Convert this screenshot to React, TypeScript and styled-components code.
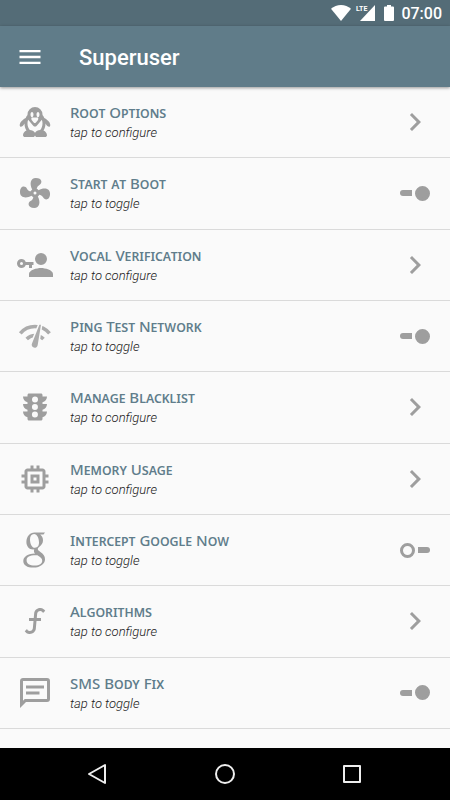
import React, { useState } from "react";
import styled, { createGlobalStyle } from "styled-components";
import { MdChevronRight, MdMemory, MdMenu, MdTraffic } from "react-icons/md";

const GlobalStyle = createGlobalStyle`
  *, *::before, *::after { box-sizing: border-box; }
  body {
    margin: 0;
    background: #fafafa;
    font-family: Roboto, "Noto Sans", sans-serif;
  }
`;

const Screen = styled.div`
  display: flex;
  flex-direction: column;
  min-height: 100vh;
`;

const StatusBar = styled.div`
  display: flex;
  align-items: center;
  justify-content: flex-end;
  height: 26px;
  padding-right: 8px;
  background: #546c77;
  color: #fff;
`;

const StatusIcon = styled.svg<{ $gap: number }>`
  display: block;
  height: 16px;
  margin-right: ${(p) => p.$gap}px;
  fill: #fff;
`;

const NetworkType = styled.span`
  align-self: flex-start;
  margin: 5px -7px 0 0;
  font: 700 7px/8px Roboto, sans-serif;
`;

const Clock = styled.time`
  font-size: 16px;
  font-weight: 500;
  line-height: 24px;
  padding-top: 2px;
`;

const AppBar = styled.header`
  display: flex;
  align-items: center;
  height: 61px;
  padding: 0 16px;
  gap: 35px;
  background: #607c89;
  color: #fff;
  box-shadow: 0 1px 3px rgba(0, 0, 0, 0.4);
`;

const IconButton = styled.button`
  display: flex;
  padding: 0;
  border: 0;
  background: none;
  color: inherit;
  cursor: pointer;
`;

const AppTitle = styled.h1`
  margin: 0;
  padding-top: 2px;
  font-size: 22px;
  font-weight: 500;
  line-height: 28px;
`;

const Options = styled.ul`
  flex: 1;
  display: grid;
  grid-auto-rows: 1fr;
  margin: 0;
  padding: 0 0 19px;
  list-style: none;
`;

const Option = styled.li`
  display: flex;
  border-bottom: 1px solid #dadada;
`;

const OptionBody = styled.label`
  flex: 1;
  display: flex;
  align-items: center;
  min-height: 70px;
  padding: 0 17px;
  border: 0;
  background: none;
  font-family: inherit;
  text-align: left;
  cursor: pointer;
`;

const Leading = styled.span`
  display: flex;
  margin-right: 17px;
  color: #9e9e9e;
`;

const Texts = styled.span`
  flex: 1;
  display: flex;
  flex-direction: column;
  gap: 2px;
`;

const Name = styled.span`
  font-family: "Noto Sans", sans-serif;
  font-size: 15px;
  font-weight: 500;
  font-variant-caps: small-caps;
  line-height: 20px;
  color: #607d8b;
`;

const Hint = styled.span`
  font-size: 13px;
  font-style: italic;
  font-weight: 300;
  line-height: 18px;
  color: #212121;
`;

const Trailing = styled.span`
  display: flex;
  justify-content: center;
  width: 36px;
  color: #9e9e9e;
`;

const Switch = styled.input`
  appearance: none;
  display: flex;
  flex-direction: row-reverse;
  align-items: center;
  justify-content: space-between;
  width: 30px;
  height: 15px;
  margin: 0;
  cursor: pointer;

  &::before {
    content: "";
    width: 12px;
    height: 6px;
    border-radius: 0 3px 3px 0;
    background: #9e9e9e;
  }
  &::after {
    content: "";
    width: 15px;
    height: 15px;
    border: 3px solid #9e9e9e;
    border-radius: 50%;
  }
  &:checked {
    flex-direction: row;
  }
  &:checked::before {
    border-radius: 3px 0 0 3px;
  }
  &:checked::after {
    background: #9e9e9e;
  }
`;

const NavBar = styled.nav`
  display: flex;
  align-items: center;
  justify-content: center;
  gap: 99px;
  height: 52px;
  background: #000;
`;

const NavIcon = styled.svg`
  display: block;
  width: 28px;
  height: 28px;
  fill: none;
  stroke: #eee;
  stroke-width: 2;
  stroke-linejoin: round;
`;

const Glyph = ({ d }: { d: string }) => (
  <svg width="36" height="36" viewBox="0 0 24 24" fill="currentColor" aria-hidden="true">
    <path d={d} />
  </svg>
);

const PENGUIN =
  "M13.18,14.5C12.53,15.26 11.47,15.26 10.82,14.5L7.44,10.5C7.16,11.28 7,12.12 7,13C7,14.67 7.57,16.18 8.5,17.27C10,17.37 11.29,17.96 11.78,19C11.85,19 11.93,19 12.22,19C12.71,18 13.95,17.44 15.46,17.33C16.41,16.24 17,14.7 17,13C17,12.12 16.84,11.28 16.56,10.5L13.18,14.5M20,20.75C20,21.3 19.3,22 18.75,22H13.25C12.7,22 12,21.3 12,20.75C12,21.3 11.3,22 10.75,22H5.25C4.7,22 4,21.3 4,20.75C4,19.45 4.94,18.31 6.3,17.65C5.5,16.34 5,14.73 5,13C4,15 2.7,15.56 2.09,15C1.5,14.44 1.79,12.83 3.1,11.41C3.84,10.6 5,9.62 5.81,9.25C6.13,8.56 6.54,7.93 7,7.38V7A5,5 0 0,1 12,2A5,5 0 0,1 17,7V7.38C17.46,7.93 17.87,8.56 18.19,9.25C19,9.62 20.16,10.6 20.9,11.41C22.21,12.83 22.5,14.44 21.91,15C21.3,15.56 20,15 19,13C19,14.75 18.5,16.37 17.67,17.69C19,18.33 20,19.45 20,20.75M9.88,9C9.46,9.5 9.46,10.27 9.88,10.75L11.13,12.25C11.54,12.73 12.21,12.73 12.63,12.25L13.88,10.75C14.29,10.27 14.29,9.5 13.88,9H9.88M10,5.25C9.45,5.25 9,5.9 9,7C9,8.1 9.45,8.75 10,8.75C10.55,8.75 11,8.1 11,7C11,5.9 10.55,5.25 10,5.25M14,5.25C13.45,5.25 13,5.9 13,7C13,8.1 13.45,8.75 14,8.75C14.55,8.75 15,8.1 15,7C15,5.9 14.55,5.25 14,5.25Z";
const FAN =
  "M12,11A1,1 0 0,0 11,12A1,1 0 0,0 12,13A1,1 0 0,0 13,12A1,1 0 0,0 12,11M12.5,2C17,2 17.11,5.57 14.75,6.75C13.76,7.24 13.32,8.29 13.13,9.22C13.61,9.42 14.03,9.73 14.35,10.13C18.05,8.13 22.03,8.92 22.03,12.5C22.03,17 18.46,17.1 17.28,14.73C16.78,13.74 15.72,13.3 14.79,13.11C14.59,13.59 14.28,14 13.88,14.34C15.87,18.03 15.08,22 11.5,22C7,22 6.91,18.42 9.27,17.24C10.25,16.75 10.69,15.71 10.89,14.79C10.4,14.59 9.97,14.27 9.65,13.87C5.96,15.85 2,15.07 2,11.5C2,7 5.56,6.89 6.74,9.26C7.24,10.25 8.29,10.68 9.22,10.87C9.41,10.39 9.73,9.97 10.14,9.65C8.15,5.96 8.94,2 12.5,2Z";
const ACCOUNT_KEY =
  "M11,10V12H10V14H8V12H5.83C5.42,13.17 4.31,14 3,14A3,3 0 0,1 0,11A3,3 0 0,1 3,8C4.31,8 5.42,8.83 5.83,10H11M3,10A1,1 0 0,0 2,11A1,1 0 0,0 3,12A1,1 0 0,0 4,11A1,1 0 0,0 3,10M16,14C18.67,14 24,15.34 24,18V20H8V18C8,15.34 13.33,14 16,14M16,12A4,4 0 0,1 12,8A4,4 0 0,1 16,4A4,4 0 0,1 20,8A4,4 0 0,1 16,12Z";
const FUNCTION =
  "M15.6,5.29C14.5,5.19 13.53,6 13.43,7.11L13.18,10H16V12H13L12.56,17.07C12.37,19.27 10.43,20.9 8.23,20.7C6.92,20.59 5.82,19.86 5.17,18.83L6.67,17.33C6.91,18.07 7.57,18.64 8.4,18.71C9.5,18.81 10.47,18 10.57,16.89L11,12H8V10H11.17L11.44,6.93C11.63,4.73 13.57,3.1 15.77,3.3C17.08,3.41 18.18,4.14 18.83,5.17L17.33,6.67C17.09,5.93 16.43,5.36 15.6,5.29Z";
const MESSAGE =
  "M20,2A2,2 0 0,1 22,4V16A2,2 0 0,1 20,18H6L2,22V4C2,2.89 2.9,2 4,2H20M4,4V17.17L5.17,16H20V4H4M6,7H18V9H6V7M6,11H15V13H6V11Z";

const NetworkGauge = () => (
  <svg width="36" height="36" viewBox="0 0 36 36" fill="none" aria-hidden="true">
    <g stroke="#acacac" strokeWidth="3.600">
      <path d="M3.300 15.300A19 19 0 0 1 32.500 15.300" />
      <path d="M9.700 21A12 12 0 0 1 26.500 21" />
    </g>
    <path
      d="M23.900 7.300L20.700 27A3 3 0 1 1 15 25.400L22.300 7.100Q23.200 6 23.900 7.300Z"
      fill="#acacac"
      stroke="#fafafa"
      strokeWidth="3"
      paintOrder="stroke"
    />
  </svg>
);

const GoogleLogo = () => (
  <svg width="36" height="36" viewBox="0 0 36 36" fill="currentColor" fillRule="evenodd" aria-hidden="true">
    <path d="M17.5 0.5H28L26.5 2.5H23.2C25 4 26 5.8 26 8.3C26 11.2 24.6 13 22.7 14.4C21.2 15.6 20.8 16.2 20.8 17.1C20.8 18.1 21.7 18.8 23.4 20.1C26.4 22.2 28 24.2 28 27.3C28 31.8 23.6 35.6 16.4 35.6C10 35.6 6.3 33 6.3 29.2C6.3 25.4 9.6 22 18.1 21.6C17.3 20.7 16.9 19.9 16.9 18.9L17.2 17.3L16.2 17.4C11.7 17.4 9.4 13.8 9.4 9.9C9.4 4.5 13 0.5 17.5 0.5ZM17 2C14.4 2 13 4.2 13 7.4C13 11.5 14.8 15.8 18 15.8C20.800 15.8 22 13.5 22 10.6C22 6.6 20.300 2 17 2ZM18.6 23.200C12.5 23.200 9.600 24.8 9.600 28.2C9.600 31.6 12.6 33.6 17.7 33.6C22.6 33.6 25.2 31.7 25.2 28.8C25.2 26.6 23.9 25.5 20.400 23.200Z" />
  </svg>
);

type Item = { name: string; icon: React.ReactNode; toggle?: boolean; on?: boolean };

const ITEMS: Item[] = [
  { name: "Root Options", icon: <Glyph d={PENGUIN} /> },
  { name: "Start at Boot", icon: <Glyph d={FAN} />, toggle: true, on: true },
  { name: "Vocal Verification", icon: <Glyph d={ACCOUNT_KEY} /> },
  { name: "Ping Test Network", icon: <NetworkGauge />, toggle: true, on: true },
  { name: "Manage Blacklist", icon: <MdTraffic size={36} /> },
  { name: "Memory Usage", icon: <MdMemory size={36} /> },
  { name: "Intercept Google Now", icon: <GoogleLogo />, toggle: true, on: false },
  { name: "Algorithms", icon: <Glyph d={FUNCTION} /> },
  { name: "SMS Body Fix", icon: <Glyph d={MESSAGE} />, toggle: true, on: true },
];

const OptionRow = ({ item }: { item: Item }) => {
  const [on, setOn] = useState(Boolean(item.on));
  const id = item.name.toLowerCase().replace(/ /g, "-");
  const content = (
    <>
      <Leading>{item.icon}</Leading>
      <Texts>
        <Name>{item.name}</Name>
        <Hint>{item.toggle ? "tap to toggle" : "tap to configure"}</Hint>
      </Texts>
    </>
  );
  return (
    <Option>
      {item.toggle ? (
        <OptionBody htmlFor={id}>
          {content}
          <Trailing>
            <Switch id={id} type="checkbox" checked={on} onChange={() => setOn(!on)} />
          </Trailing>
        </OptionBody>
      ) : (
        <OptionBody as="button" type="button">
          {content}
          <Trailing>
            <MdChevronRight size={36} />
          </Trailing>
        </OptionBody>
      )}
    </Option>
  );
};

export default function App() {
  return (
    <Screen>
      <GlobalStyle />
      <StatusBar>
        <StatusIcon $gap={5} width="20" viewBox="0 0 20 16">
          <path d="M10 16L0 3.8C2.8 1.4 6.2 0 10 0S17.2 1.4 20 3.8Z" />
        </StatusIcon>
        <NetworkType>LTE</NetworkType>
        <StatusIcon $gap={9} width="15" viewBox="0 0 15 16">
          <path d="M15 0V16H0Z" />
        </StatusIcon>
        <StatusIcon $gap={7} width="10" viewBox="0 0 10 16">
          <path d="M3 0H7V1.500H9A1 1 0 0 1 10 2.500V15A1 1 0 0 1 9 16H1A1 1 0 0 1 0 15V2.500A1 1 0 0 1 1 1.500H3Z" />
        </StatusIcon>
        <Clock>07:00</Clock>
      </StatusBar>
      <AppBar>
        <IconButton type="button" aria-label="Menu">
          <MdMenu size={28} />
        </IconButton>
        <AppTitle>Superuser</AppTitle>
      </AppBar>
      <Options>
        {ITEMS.map((item) => (
          <OptionRow key={item.name} item={item} />
        ))}
      </Options>
      <NavBar>
        <IconButton type="button" aria-label="Back">
          <NavIcon viewBox="0 0 28 28">
            <path d="M21 5V23L5 14Z" />
          </NavIcon>
        </IconButton>
        <IconButton type="button" aria-label="Home">
          <NavIcon viewBox="0 0 28 28">
            <circle cx="14" cy="14" r="9" />
          </NavIcon>
        </IconButton>
        <IconButton type="button" aria-label="Recent apps">
          <NavIcon viewBox="0 0 28 28">
            <rect x="6" y="6" width="16" height="16" />
          </NavIcon>
        </IconButton>
      </NavBar>
    </Screen>
  );
}
